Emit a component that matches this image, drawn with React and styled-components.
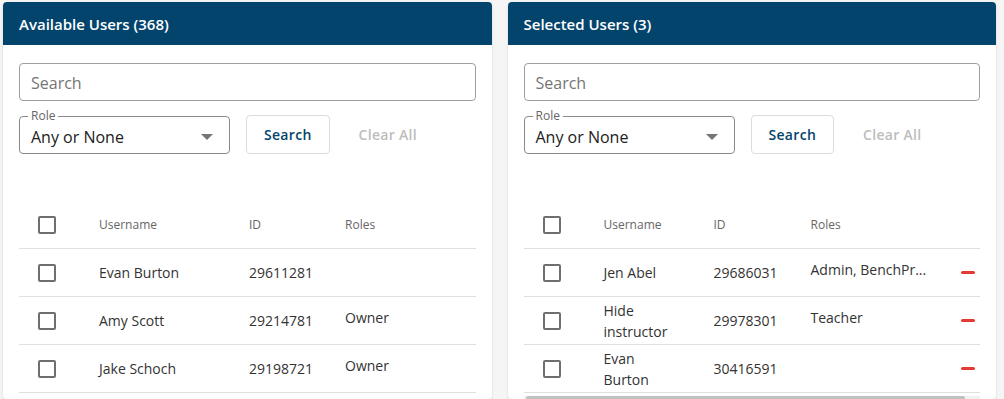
import React from "react";
import styled, { createGlobalStyle } from "styled-components";

const GlobalStyle = createGlobalStyle`
  body {
    margin: 0;
    background: #f5f5f5;
    font-family: 'Open Sans', 'Noto Sans', sans-serif;
  }
`;

const Page = styled.div`
  display: flex;
  gap: 16px;
  padding: 2px 8px 0 3px;
  height: 397px;
  overflow: hidden;
`;

const Panel = styled.section`
  flex: 1;
  min-width: 0;
  background: #fff;
  border-radius: 4px;
  box-shadow: 0 1px 3px rgba(0, 0, 0, 0.12);
  overflow: hidden;
`;

const Header = styled.header`
  height: 43px;
  display: flex;
  align-items: center;
  padding: 0 16px;
  background: #03446d;
  color: #fff;
  font-size: 15px;
  font-weight: 600;
`;

const Body = styled.div`
  padding: 18px 16px 0;
`;

const SearchInput = styled.div`
  height: 38px;
  box-sizing: border-box;
  border: 1px solid #9e9e9e;
  border-radius: 4px;
  display: flex;
  align-items: center;
  padding: 1px 11px 0;
  font-size: 16px;
  color: #757575;
`;

const Filters = styled.div`
  display: flex;
  align-items: center;
  margin-top: 14px;
`;

const Select = styled.div`
  position: relative;
  width: 211px;
  height: 38px;
  box-sizing: border-box;
  border: 1px solid #8a8a8a;
  border-radius: 4px;
  display: flex;
  align-items: center;
  padding: 4px 11px 0;
  font-size: 16px;
  color: #212121;

  .label {
    position: absolute;
    left: 8px;
    top: -8px;
    padding: 0 3px;
    background: #fff;
    font-size: 12px;
    line-height: 14px;
    color: #666;
  }

  svg {
    margin-left: auto;
    margin-right: 5px;
  }
`;

const Button = styled.button`
  all: unset;
  box-sizing: border-box;
  height: 39px;
  margin-left: ${(p) => (p.$outlined ? "16px" : "17px")};
  padding: 0 ${(p) => (p.$outlined ? "17px" : "11px")};
  border: 1px solid ${(p) => (p.$outlined ? "#dcdcdc" : "transparent")};
  border-radius: 4px;
  font-size: 14px;
  font-weight: 600;
  letter-spacing: 0.3px;
  color: ${(p) => (p.$muted ? "#bdbdbd" : "#03446d")};
  display: flex;
  align-items: center;
`;

const Table = styled.div`
  margin-top: 47px;
`;

const Row = styled.div`
  display: grid;
  grid-template-columns: ${(p) => p.$cols};
  align-items: center;
  min-height: 48px;
  box-sizing: border-box;
  border-bottom: 1px solid #e0e0e0;
  font-size: ${(p) => (p.$head ? "12px" : "14px")};
  color: ${(p) => (p.$head ? "#666" : "#333")};
  line-height: 21px;
`;

const Cell = styled.div`
  padding-right: ${(p) => p.$pr || 0}px;
  padding-bottom: ${(p) => (p.$raised ? 6 : 0)}px;
  min-width: 0;
  white-space: ${(p) => (p.$nowrap ? "nowrap" : "normal")};
`;

const Checkbox = styled.span`
  display: block;
  width: 18px;
  height: 18px;
  box-sizing: border-box;
  margin-left: 19px;
  border: 2px solid #6f6f6f;
  border-radius: 2px;
`;

const Remove = styled.span`
  justify-self: end;
  margin-right: 5px;
  width: 14px;
  height: 3px;
  border-radius: 2px;
  background: #e53935;
`;

const ScrollTrack = styled.div`
  margin-top: 3px;
  height: 6px;
  background: #f1f1f1;
  padding: 0 15px 0 2px;

  div {
    height: 4px;
    border-radius: 2px;
    background: #c1c1c1;
  }
`;

const Arrow = () => (
  <svg width="12" height="6" viewBox="0 0 12 6">
    <path d="M0 0 L12 0 L6 6 Z" fill="#757575" />
  </svg>
);

const Controls = () => (
  <>
    <SearchInput>Search</SearchInput>
    <Filters>
      <Select>
        <span className="label">Role</span>
        Any or None
        <Arrow />
      </Select>
      <Button $outlined>Search</Button>
      <Button $muted>Clear All</Button>
    </Filters>
  </>
);

const available = [
  { name: "Evan Burton", id: "29611281", roles: "" },
  { name: "Amy Scott", id: "29214781", roles: "Owner" },
  { name: "Jake Schoch", id: "29198721", roles: "Owner" },
];

const selected = [
  { name: "Jen Abel", id: "29686031", roles: "Admin, BenchPr..." },
  { name: "Hide instructor", id: "29978301", roles: "Teacher" },
  { name: "Evan Burton", id: "30416591", roles: "" },
];

const leftCols = "80px 150px 96px 1fr";
const rightCols = "80px 110px 97px 1fr 40px";

export default function App() {
  return (
    <>
      <GlobalStyle />
      <Page>
        <Panel>
          <Header>Available Users (368)</Header>
          <Body>
            <Controls />
            <Table>
              <Row $head $cols={leftCols}>
                <Checkbox />
                <Cell>Username</Cell>
                <Cell>ID</Cell>
                <Cell>Roles</Cell>
              </Row>
              {available.map((u) => (
                <Row key={u.id} $cols={leftCols}>
                  <Checkbox />
                  <Cell>{u.name}</Cell>
                  <Cell>{u.id}</Cell>
                  <Cell $raised>{u.roles}</Cell>
                </Row>
              ))}
            </Table>
          </Body>
        </Panel>
        <Panel>
          <Header>Selected Users (3)</Header>
          <Body>
            <Controls />
            <Table>
              <Row $head $cols={rightCols}>
                <Checkbox />
                <Cell>Username</Cell>
                <Cell>ID</Cell>
                <Cell>Roles</Cell>
                <Cell />
              </Row>
              {selected.map((u) => (
                <Row key={u.id} $cols={rightCols}>
                  <Checkbox />
                  <Cell $pr={36}>{u.name}</Cell>
                  <Cell>{u.id}</Cell>
                  <Cell $raised $nowrap>{u.roles}</Cell>
                  <Remove />
                </Row>
              ))}
              <ScrollTrack>
                <div />
              </ScrollTrack>
            </Table>
          </Body>
        </Panel>
      </Page>
    </>
  );
}
